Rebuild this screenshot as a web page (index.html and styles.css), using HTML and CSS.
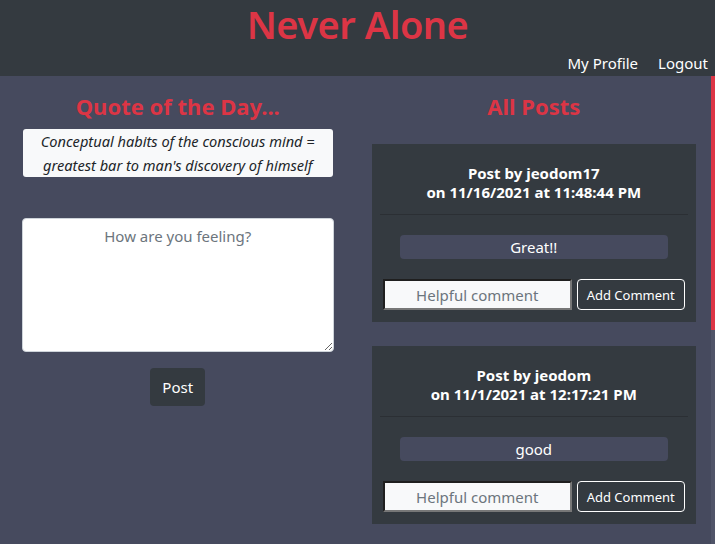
FILE: index.html
```html
<!DOCTYPE html>
<html lang="en">
<head>
<meta charset="utf-8">
<title>Never Alone</title>
<link rel="stylesheet" href="styles.css">
</head>
<body>
<header class="topbar">
  <h1 class="brand">Never Alone</h1>
  <nav class="nav">
    <a class="nav-link" href="#">My Profile</a>
    <a class="nav-link" href="#">Logout</a>
  </nav>
</header>
<main class="main">
  <div class="scroll-area">
    <div class="row">
      <section class="col col-left">
        <h3 class="section-title">Quote of the Day...</h3>
        <div class="quote">Conceptual habits of the conscious mind =<br>greatest bar to man's discovery of himself</div>
        <form class="post-form">
          <textarea class="feel" placeholder="How are you feeling?"></textarea>
          <button type="button" class="btn-post">Post</button>
        </form>
      </section>
      <section class="col col-right">
        <h3 class="section-title">All Posts</h3>
        <div class="posts">
          <article class="card">
            <h6 class="card-title"><span class="line">Post by jeodom17</span><span class="line">on 11/16/2021 at 11:48:44 PM</span></h6>
            <hr class="rule">
            <p class="content">Great!!</p>
            <div class="comment-row">
              <input class="comment" type="text" placeholder="Helpful comment">
              <button type="button" class="btn-comment">Add Comment</button>
            </div>
          </article>
          <article class="card">
            <h6 class="card-title"><span class="line">Post by jeodom</span><span class="line">on 11/1/2021 at 12:17:21 PM</span></h6>
            <hr class="rule">
            <p class="content">good</p>
            <div class="comment-row">
              <input class="comment" type="text" placeholder="Helpful comment">
              <button type="button" class="btn-comment">Add Comment</button>
            </div>
          </article>
        </div>
      </section>
    </div>
  </div>
  <div class="scrollbar"><div class="thumb"></div></div>
</main>
</body>
</html>
```
FILE: styles.css
```css
* { box-sizing: border-box; }
html, body { margin: 0; padding: 0; height: 100%; }
body {
  font-family: "Noto Sans", "Open Sans", sans-serif;
  font-size: 16px;
  line-height: 1.5;
  color: #fff;
  background: #464a5e;
  overflow: hidden;
  display: flex;
  flex-direction: column;
}
.topbar {
  background: #343a40;
  height: 76px;
  flex: none;
  display: flex;
  flex-direction: column;
}
.brand {
  margin: 0;
  padding-top: 1px;
  text-align: center;
  color: #dc3545;
  font-size: 38px;
  font-weight: 600;
  line-height: 46px;
  letter-spacing: -0.5px;
}
.nav {
  display: flex;
  justify-content: flex-end;
  gap: 20px;
  padding: 4px 7px 0 0;
}
.nav-link {
  color: #fff;
  text-decoration: none;
  font-size: 15px;
  line-height: 24px;
}
.main {
  flex: 1;
  min-height: 0;
  display: flex;
}
.scroll-area {
  flex: 1;
  min-width: 0;
  overflow: hidden;
}
.scrollbar {
  flex: none;
  width: 4px;
  background: #505468;
}
.thumb {
  height: 254px;
  background: #dc3545;
}
.row {
  display: grid;
  grid-template-columns: 1fr 1fr;
}
.col { text-align: center; }
.col-left { padding: 16px 22px 0; }
.col-right { padding: 16px 15px 0 16px; }
.section-title {
  margin: 0;
  color: #dc3545;
  font-size: 22px;
  font-weight: 700;
  line-height: 29px;
}
.quote {
  margin: 8px 1px 0;
  background: #f8f9fa;
  color: #212529;
  border-radius: 3px;
  font-style: italic;
  font-size: 14.6px;
  line-height: 24px;
  white-space: nowrap;
}
.post-form {
  margin-top: 41px;
  display: flex;
  flex-direction: column;
  align-items: center;
  gap: 16px;
}
.feel {
  width: 100%;
  height: 134px;
  display: block;
  border: 1px solid #ced4da;
  border-radius: 4px;
  padding: 6px 12px;
  font-family: inherit;
  font-size: 15px;
  line-height: 1.5;
  text-align: center;
  color: #212529;
  background: #fff;
}
.feel::placeholder { color: #6c757d; }
.btn-post {
  background: #343a40;
  color: #fff;
  border: 0;
  border-radius: 4px;
  height: 38px;
  padding: 0 12px;
  font-family: inherit;
  font-size: 15px;
}
.posts {
  margin-top: 23px;
  display: flex;
  flex-direction: column;
  gap: 24px;
}
.card {
  background: #343a40;
  padding: 20px 8px 12px;
}
.card-title {
  margin: 0;
  font-size: 15px;
  font-weight: 700;
  line-height: 19px;
}
.line { display: block; }
.rule {
  margin: 12px 0 0;
  border: 0;
  border-top: 1px solid #2b2f34;
}
.content {
  margin: 20px 20px 0;
  background: #464a5e;
  border-radius: 4px;
  line-height: 24px;
  font-size: 15px;
}
.comment-row {
  margin-top: 20px;
  display: flex;
  justify-content: center;
  align-items: center;
  gap: 5px;
}
.comment {
  width: 189px;
  height: 31px;
  background: #f8f9fa;
  border-style: solid;
  border-width: 2px;
  border-color: #1f1f1f #777 #777 #1f1f1f;
  font-family: inherit;
  font-size: 15px;
  text-align: center;
  color: #212529;
  padding: 0 4px;
}
.comment::placeholder { color: #6c757d; }
.btn-comment {
  height: 31px;
  width: 108px;
  background: transparent;
  color: #fff;
  border: 1px solid #fff;
  border-radius: 4px;
  font-family: inherit;
  font-size: 13px;
  padding: 0;
}
```
